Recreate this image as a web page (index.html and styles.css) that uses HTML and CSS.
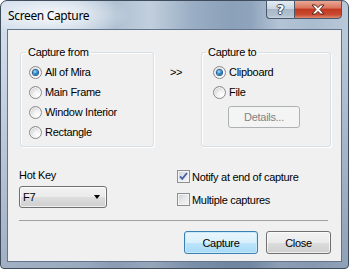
FILE: index.html
```html
<!DOCTYPE html>
<html>
<head>
<meta charset="utf-8">
<link rel="stylesheet" href="styles.css">
</head>
<body>
<div class="window">
  <div class="titlebar">
    <span class="title">Screen Capture</span>
    <div class="caption-buttons">
      <div class="cbtn help">?</div>
      <div class="cbtn close">
        <svg width="14" height="11" viewBox="0 0 14 11">
          <path d="M1 1 H4.5 L7 3.6 L9.5 1 H13 L9 5.5 L13 10 H9.5 L7 7.4 L4.5 10 H1 L5 5.5 Z" fill="#fff" stroke="#5a2318" stroke-width="1" stroke-linejoin="round"/>
        </svg>
      </div>
    </div>
  </div>
  <div class="client">
    <div class="top-row">
      <fieldset class="group group-from">
        <legend>Capture from</legend>
        <label class="opt"><span class="radio checked"></span>All of Mira</label>
        <label class="opt"><span class="radio"></span>Main Frame</label>
        <label class="opt"><span class="radio"></span>Window Interior</label>
        <label class="opt"><span class="radio"></span>Rectangle</label>
      </fieldset>
      <div class="arrow">&gt;&gt;</div>
      <fieldset class="group group-to">
        <legend>Capture to</legend>
        <label class="opt"><span class="radio checked"></span>Clipboard</label>
        <label class="opt"><span class="radio"></span>File</label>
        <div class="btn disabled details">Details...</div>
      </fieldset>
    </div>
    <div class="bottom">
      <div class="hotkey">
        <div class="hk-label">Hot Key</div>
        <div class="combo"><span>F7</span><span class="caret"></span></div>
      </div>
      <div class="checks">
        <label class="chk"><span class="box checked"><svg width="11" height="11" viewBox="0 0 11 11"><path d="M2 5.3 L4.3 7.8 L9 2" fill="none" stroke="#4762a8" stroke-width="1.9"/></svg></span>Notify at end of capture</label>
        <label class="chk"><span class="box"></span>Multiple captures</label>
      </div>
    </div>
    <div class="separator"></div>
    <div class="buttons">
      <div class="btn default">Capture</div>
      <div class="btn">Close</div>
    </div>
  </div>
</div>
</body>
</html>
```

FILE: styles.css
```css
* { box-sizing: border-box; }
html, body { margin: 0; padding: 0; }
body {
  width: 349px;
  height: 269px;
  overflow: hidden;
  background: #ffffff;
  font-family: "Liberation Sans", Arial, sans-serif;
  font-size: 11px;
  letter-spacing: -0.3px;
  color: #000;
}
.window {
  width: 349px;
  height: 269px;
  border: 1px solid #3f4c5c;
  border-radius: 7px 7px 4px 4px;
  padding: 0 6px 6px 6px;
  display: flex;
  flex-direction: column;
  background:
    radial-gradient(ellipse 80px 22px at 50px 14px, rgba(255,255,255,0.85), rgba(255,255,255,0) 100%),
    linear-gradient(180deg, rgba(0,0,0,0) 0, rgba(0,0,0,0) 40px, rgba(40,60,95,0.28) 100%),
    linear-gradient(90deg, #d0dcea 0%, #c7d5e4 22%, #afc0d3 33%, #c1cfdd 43%, #9aaec4 55%, #8ba1b9 66%, #8fa4bc 72%, #b3c4d6 80%, #aabccf 90%, #b9c9da 100%);
}
.titlebar {
  height: 28px;
  display: flex;
  justify-content: space-between;
  align-items: flex-start;
}
.title {
  font-family: "Noto Sans", "Open Sans", sans-serif;
  font-size: 12px;
  letter-spacing: -0.35px;
  line-height: 16px;
  padding: 7px 0 0 1px;
  color: #000;
}
.caption-buttons {
  display: flex;
  height: 19px;
  margin-top: -1px;
}
.cbtn {
  height: 19px;
  border: 1px solid #4a586b;
  display: flex;
  align-items: center;
  justify-content: center;
}
.help {
  width: 28px;
  border-right: none;
  border-radius: 0 0 0 4px;
  background: linear-gradient(180deg, #e4ebf2 0%, #cbd6e1 45%, #a9b8c8 50%, #b3c1cf 85%, #c7d3de 100%);
  color: #fff;
  font-family: "DejaVu Sans", sans-serif;
  font-weight: bold;
  font-size: 13px;
  letter-spacing: 0;
  text-shadow: 1px 0 0 #3a4657, -1px 0 0 #3a4657, 0 1px 0 #3a4657, 0 -1px 0 #3a4657;
}
.close {
  width: 48px;
  border-radius: 0 0 4px 0;
  background: linear-gradient(180deg, #e9a897 0%, #d9765f 40%, #c2391f 50%, #c84a30 80%, #de8a70 100%);
}
.client {
  flex: 1;
  background: #f0f0f0;
  border: 1px solid #62748b;
  display: flex;
  flex-direction: column;
}
.top-row {
  display: flex;
  align-items: flex-start;
  margin-top: 16px;
  padding-left: 12px;
}
.group {
  margin: 0;
  border: 1px solid #d5dfe5;
  border-radius: 3px;
  box-shadow: inset 1px 1px 0 #fff, 1px 1px 0 #fff;
  height: 101px;
}
.group legend {
  padding: 0 2px;
  line-height: 13px;
}
.group-from {
  width: 134px;
  padding: 3px 0 0 8px;
}
.group-from legend {
  margin-left: -3px;
}
.group-to {
  width: 130px;
  padding: 3px 0 0 11px;
}
.group-to legend {
  margin-left: -7px;
}
.arrow {
  width: 31px;
  margin-left: 16px;
  margin-top: 20px;
  line-height: 13px;
}
.opt {
  display: flex;
  align-items: center;
  height: 20px;
  gap: 3px;
}
.radio {
  width: 13px;
  height: 13px;
  border-radius: 50%;
  border: 1px solid #8a8a8a;
  background: radial-gradient(circle at 68% 72%, #ffffff 0%, #f2f2f2 35%, #cbcbcb 90%);
  box-shadow: inset 0 0 0 1px rgba(255,255,255,0.6);
  position: relative;
  flex: none;
}
.radio.checked::after {
  content: "";
  position: absolute;
  left: 3px;
  top: 3px;
  width: 5px;
  height: 5px;
  border-radius: 50%;
  background: radial-gradient(circle at 40% 35%, #a9e4ff 0%, #2f8fd0 45%, #0e4a82 90%);
  box-shadow: 0 0 0 1px #2a5f8f;
}
.btn {
  height: 22px;
  border: 1px solid #707070;
  border-radius: 3px;
  display: flex;
  align-items: center;
  justify-content: center;
  background: linear-gradient(180deg, #f2f2f2 0%, #ebebeb 50%, #dddddd 51%, #cfcfcf 100%);
  box-shadow: inset 0 0 0 1px rgba(255,255,255,0.7);
}
.details {
  width: 72px;
  margin-left: 15px;
  margin-top: 4px;
}
.btn.disabled {
  border-color: #adb2b5;
  background: #f4f4f4;
  color: #838383;
  box-shadow: none;
}
.bottom {
  display: flex;
  margin-top: 22px;
  padding-left: 11px;
}
.hotkey {
  width: 158px;
}
.hk-label {
  line-height: 13px;
}
.combo {
  margin-top: 4px;
  width: 88px;
  height: 22px;
  border: 1px solid #707070;
  border-radius: 3px;
  display: flex;
  align-items: center;
  justify-content: space-between;
  padding: 0 6px 0 3px;
  background: linear-gradient(180deg, #f2f2f2 0%, #ebebeb 50%, #dddddd 51%, #cfcfcf 100%);
  box-shadow: inset 0 0 0 1px rgba(255,255,255,0.7);
}
.caret {
  width: 0;
  height: 0;
  border-left: 3.5px solid transparent;
  border-right: 3.5px solid transparent;
  border-top: 4px solid #000;
}
.checks {
  display: flex;
  flex-direction: column;
  gap: 10px;
  padding-top: 1px;
}
.chk {
  display: flex;
  align-items: center;
  height: 13px;
  gap: 2px;
}
.box {
  width: 13px;
  height: 13px;
  border: 1px solid #8e8f8f;
  background: linear-gradient(135deg, #cbcfd5 0%, #e6e8eb 50%, #f6f6f6 100%);
  box-shadow: inset 0 0 0 1px #f4f4f4;
  display: flex;
  align-items: center;
  justify-content: center;
  flex: none;
}
.separator {
  margin: 12px 13px 0 11px;
  height: 1px;
  background: #a0a0a0;
}
.buttons {
  display: flex;
  justify-content: flex-end;
  gap: 8px;
  margin-top: 10px;
  padding-right: 10px;
}
.buttons .btn {
  height: 23px;
}
.buttons .btn.default {
  width: 74px;
  border-color: #3c7fb1;
  background: linear-gradient(180deg, #eaf6fd 0%, #d9f0fc 50%, #bee6fd 51%, #a7d9f5 100%);
  box-shadow: inset 0 0 0 1px #c6ecfc;
}
.buttons .btn:last-child {
  width: 65px;
}
```
